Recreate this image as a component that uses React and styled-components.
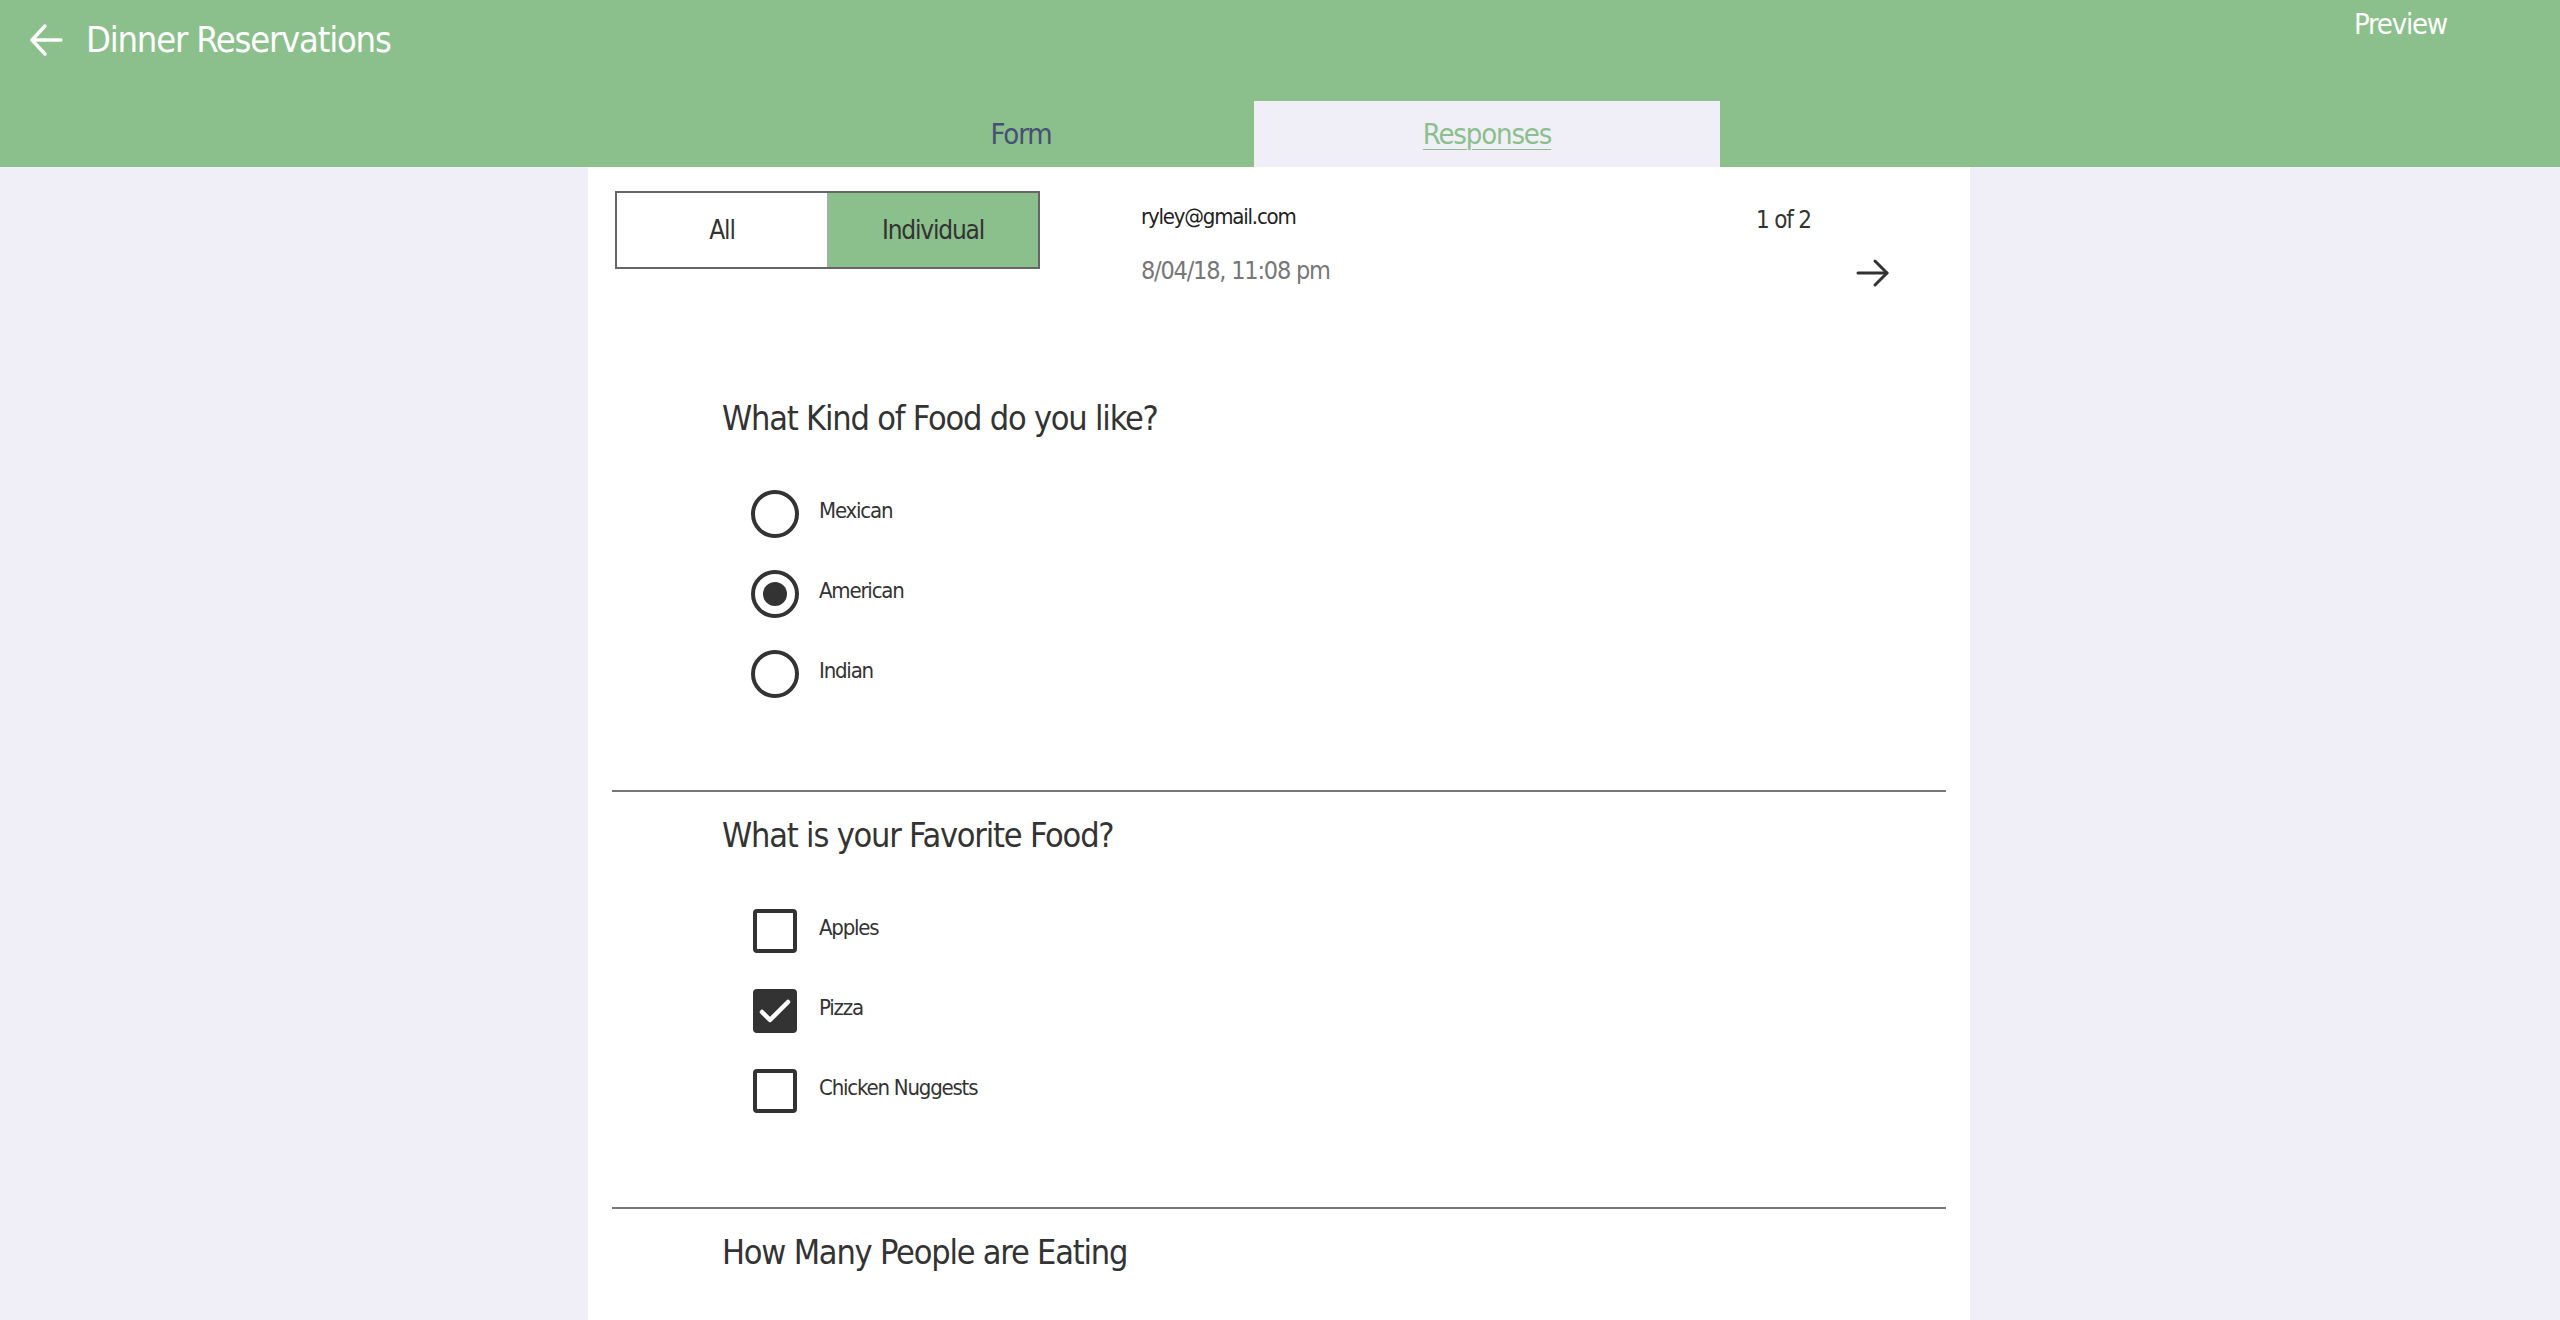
import React from 'react';
import styled, { createGlobalStyle } from 'styled-components';

const GREEN = '#8bbf8c';
const LAVENDER = '#f0eff8';
const INK = '#333333';

const GlobalStyle = createGlobalStyle`
  html, body {
    margin: 0;
    padding: 0;
    background: ${LAVENDER};
    overflow: hidden;
  }
  body {
    font-family: "Liberation Sans Narrow", "DejaVu Sans Condensed", "Liberation Sans", sans-serif;
    letter-spacing: -0.075em;
    color: ${INK};
  }
`

const Page = styled.div`
  min-height: 100vh;
  display: flex;
  flex-direction: column;
`

const Header = styled.header`
  height: 167px;
  background: ${GREEN};
  display: flex;
  flex-direction: column;
`

const TopBar = styled.div`
  display: flex;
  justify-content: space-between;
  align-items: flex-start;
  padding: 4px 113px 0 29px;
`

const BackTitle = styled.div`
  display: flex;
  align-items: center;
  gap: 23px;
  margin-top: 11px;
  color: #ffffff;
`

const Title = styled.h1`
  margin: 0;
  font-size: 36px;
  line-height: 50px;
  font-weight: normal;
  color: #ffffff;
`

const PreviewLink = styled.span`
  font-size: 29px;
  line-height: 40px;
  color: #ffffff;
`

const TabBar = styled.nav`
  margin-top: auto;
  display: flex;
  padding-left: 788px;
`

const Tab = styled.div`
  width: 466px;
  height: 66px;
  display: flex;
  align-items: center;
  justify-content: center;
  font-size: 29px;
  letter-spacing: -0.04em;
  background: ${p => (p.$active ? LAVENDER : 'transparent')};
  color: ${p => (p.$active ? GREEN : '#465072')};
  text-decoration: ${p => (p.$active ? 'underline' : 'none')};
  text-underline-offset: 5px;
  text-decoration-thickness: 1px;
`

const Body = styled.main`
  flex: 1;
  display: flex;
  justify-content: center;
`

const Card = styled.section`
  width: 1382px;
  background: #ffffff;
  padding: 24px 24px 0;
  box-sizing: border-box;
  margin-left: -2px;
`

const CardHeader = styled.div`
  height: 100px;
  display: flex;
  align-items: flex-start;
`

const Segmented = styled.div`
  margin-left: 3px;
  display: flex;
  width: 425px;
  height: 78px;
  border: 2px solid #666666;
  box-sizing: border-box;
`

const Segment = styled.div`
  flex: 1;
  display: flex;
  align-items: center;
  justify-content: center;
  font-size: 26px;
  color: ${INK};
  background: ${p => (p.$active ? GREEN : '#ffffff')};
  & + & {
    border-left: 1px solid #aaaaaa;
  }
`

const Meta = styled.div`
  margin-left: 101px;
  margin-top: 11px;
  display: flex;
  flex-direction: column;
  gap: 22px;
`

const Email = styled.div`
  font-size: 22px;
  line-height: 30px;
  color: #222222;
`

const Timestamp = styled.div`
  font-size: 25px;
  line-height: 34px;
  color: #777777;
`

const Pager = styled.div`
  margin-left: auto;
  margin-right: 56px;
  margin-top: 13px;
  width: 134px;
  display: flex;
  flex-direction: column;
  gap: 22px;
`

const PagerCount = styled.div`
  font-size: 24px;
  line-height: 32px;
  color: ${INK};
`

const NextButton = styled.div`
  align-self: flex-end;
  height: 30px;
  display: flex;
`

const Section = styled.div`
  padding: ${p => p.$top || 20}px 0 76px 110px;
`

const Question = styled.h2`
  margin: 0 0 33px;
  font-size: 34px;
  line-height: 46px;
  font-weight: normal;
  color: ${INK};
`

const OptionRow = styled.div`
  height: 80px;
  display: flex;
  align-items: center;
  gap: 20px;
  padding-left: 29px;
`

const ControlSlot = styled.div`
  width: 48px;
  height: 48px;
  display: flex;
  align-items: center;
  justify-content: center;
`

const Radio = styled.div`
  width: 48px;
  height: 48px;
  border-radius: 50%;
  border: 4.5px solid ${INK};
  box-sizing: border-box;
  display: flex;
  align-items: center;
  justify-content: center;
  &::after {
    content: '';
    width: 24px;
    height: 24px;
    border-radius: 50%;
    background: ${p => (p.$checked ? INK : 'transparent')};
  }
`

const Checkbox = styled.div`
  width: 44px;
  height: 44px;
  border-radius: 4px;
  border: 4.5px solid ${INK};
  box-sizing: border-box;
  background: ${p => (p.$checked ? INK : '#ffffff')};
  display: flex;
  align-items: center;
  justify-content: center;
`

const OptionLabel = styled.span`
  font-size: 22px;
  line-height: 30px;
  color: ${INK};
  margin-top: -6px;
`

const Divider = styled.hr`
  margin: 0;
  border: 0;
  height: 2px;
  background: #777777;
`

const BackArrow = () => (
  <svg width="34" height="34" viewBox="0 0 34 34" fill="none" stroke="#ffffff" strokeWidth="3.4" strokeLinecap="round" strokeLinejoin="round">
    <path d="M32 17H3" />
    <path d="M16 3L3 17L16 31" />
  </svg>
)

const NextArrow = () => (
  <svg width="34" height="30" viewBox="0 0 34 30" fill="none" stroke="#333333" strokeWidth="3" strokeLinecap="round" strokeLinejoin="round">
    <path d="M2 15H31" />
    <path d="M19 3L31 15L19 27" />
  </svg>
)

const CheckMark = () => (
  <svg width="34" height="34" viewBox="0 0 34 34" fill="none" stroke="#ffffff" strokeWidth="4.5" strokeLinecap="round" strokeLinejoin="round">
    <path d="M4 18L12 26L30 8" />
  </svg>
)

const questions = [
  {
    title: 'What Kind of Food do you like?',
    kind: 'radio',
    options: [
      { label: 'Mexican' },
      { label: 'American', checked: true },
      { label: 'Indian' },
    ],
  },
  {
    title: 'What is your Favorite Food?',
    kind: 'checkbox',
    options: [
      { label: 'Apples' },
      { label: 'Pizza', checked: true },
      { label: 'Chicken Nuggests' },
    ],
  },
  {
    title: 'How Many People are Eating',
    kind: 'number',
    options: [],
  },
]

const QuestionBlock = ({ q, top }) => (
  <Section $top={top}>
    <Question>{q.title}</Question>
    {q.options.map(opt => (
      <OptionRow key={opt.label}>
        <ControlSlot>
          {q.kind === 'radio' ? (
            <Radio $checked={opt.checked} />
          ) : (
            <Checkbox $checked={opt.checked}>{opt.checked && <CheckMark />}</Checkbox>
          )}
        </ControlSlot>
        <OptionLabel>{opt.label}</OptionLabel>
      </OptionRow>
    ))}
  </Section>
)

const App = () => {
  return (
    <Page>
      <GlobalStyle />
      <Header>
        <TopBar>
          <BackTitle>
            <BackArrow />
            <Title>Dinner Reservations</Title>
          </BackTitle>
          <PreviewLink>Preview</PreviewLink>
        </TopBar>
        <TabBar>
          <Tab>Form</Tab>
          <Tab $active>Responses</Tab>
        </TabBar>
      </Header>
      <Body>
        <Card>
          <CardHeader>
            <Segmented>
              <Segment>All</Segment>
              <Segment $active>Individual</Segment>
            </Segmented>
            <Meta>
              <Email>ryley@gmail.com</Email>
              <Timestamp>8/04/18, 11:08 pm</Timestamp>
            </Meta>
            <Pager>
              <PagerCount>1 of 2</PagerCount>
              <NextButton>
                <NextArrow />
              </NextButton>
            </Pager>
          </CardHeader>
          {questions.map((q, i) => (
            <React.Fragment key={q.title}>
              {i > 0 && <Divider />}
              <QuestionBlock q={q} top={i === 0 ? 104 : 20} />
            </React.Fragment>
          ))}
        </Card>
      </Body>
    </Page>
  )
}

export default App;
